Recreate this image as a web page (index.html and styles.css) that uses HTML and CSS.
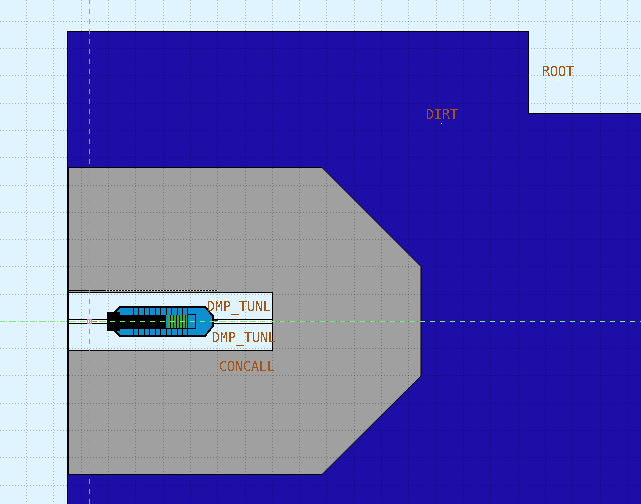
FILE: index.html
```html
<!DOCTYPE html>
<html lang="en">
<head>
<meta charset="utf-8">
<title>Geometry view</title>
<link rel="stylesheet" href="styles.css">
</head>
<body>
<svg class="canvas" width="641" height="504" viewBox="0 0 641 504" xmlns="http://www.w3.org/2000/svg">
  <defs>
    <filter id="crisp" x="-5%" y="-20%" width="110%" height="140%" color-interpolation-filters="sRGB">
      <feComponentTransfer>
        <feFuncA type="discrete" tableValues="0 0 1 1"/>
      </feComponentTransfer>
    </filter>
  </defs>

  <!-- regions -->
  <path class="dirt" d="M67.500 31.500H528.500V113.500H642V505H67.500Z"/>
  <path class="concrete" d="M68 167.500H322L421 266.500V376L322 474.500H68Z"/>
  <rect class="tunnel" x="68.500" y="292.500" width="204" height="58"/>
  <rect class="bore" x="68" y="319.500" width="204.500" height="4"/>
  <path class="edge-thick" d="M68 167V475"/>
  <path class="edge-top" d="M68 290.500H218"/>
  <path class="edge-dots" d="M106 290.500H218"/>

  <!-- grid -->
  <path class="grid" d="M26.500 0V504M53.500 0V504M81.500 0V504M108.500 0V504M135.500 0V504M163.500 0V504M190.500 0V504M217.500 0V504M245.500 0V504M272.500 0V504M299.500 0V504M326.500 0V504M354.500 0V504M381.500 0V504M408.500 0V504M436.500 0V504M463.500 0V504M490.500 0V504M518.500 0V504M545.500 0V504M572.500 0V504M600.500 0V504M627.500 0V504"/>
  <path class="grid" d="M0 21.500H641M0 48.500H641M0 75.500H641M0 103.500H641M0 130.500H641M0 157.500H641M0 185.500H641M0 212.500H641M0 239.500H641M0 266.500H641M0 294.500H641M0 321.500H641M0 348.500H641M0 375.500H641M0 403.500H641M0 430.500H641M0 457.500H641M0 485.500H641"/>

  <!-- device -->
  <path class="needle" d="M196 320H218L212 323H196Z"/>
  <path class="shell" d="M120 307H205L213 316V326L205 336H120L114 330V313Z"/>
  <rect class="core" x="107" y="312" width="13" height="19"/>
  <rect class="core" x="116" y="314.500" width="72" height="14"/>
  <path class="ribs" d="M133.500 307V336M138.500 307V336M144.500 307V336M149.500 307V336M155.500 307V336M160.500 307V336M166.500 307V336M171.500 307V336M177.500 307V336M182.500 307V336M187.500 307V336"/>
  <rect class="coil-lead" x="166" y="315" width="2" height="13"/>
  <path class="coil-lines" d="M169 315V328M172 315V328M175 315V328M178 315V328M181 315V328M184 315V328M186.500 315V328"/>
  <rect class="tip-box" x="187.500" y="314.500" width="7.500" height="14"/>

  <!-- labels -->
  <g class="labels">
    <text class="label" x="542" y="76">ROOT</text>
    <text class="label" x="426" y="119">DIRT</text>
    <text class="label" x="207" y="311">DMP_TUNL</text>
    <text class="label" x="212" y="342">DMP_TUNL</text>
    <text class="label" x="219" y="371">CONCALL</text>
  </g>
  <rect class="speck" x="558" y="80" width="1" height="1"/>
  <rect class="speck" x="441" y="123" width="1" height="1"/>
  <rect class="speck" x="239" y="315" width="1" height="1"/>

  <!-- guides -->
  <path class="axis-x" d="M0 321.500H641"/>
  <path class="axis-red" d="M93 321.500H97"/>
  <path class="axis-y" d="M89.500 0V504"/>
  <rect class="origin" x="87.500" y="319.500" width="4" height="4"/>
</svg>
</body>
</html>
```

FILE: styles.css
```css
html, body {
  margin: 0;
  padding: 0;
  background: #e0f4ff;
  overflow: hidden;
}

.canvas {
  display: block;
  shape-rendering: crispEdges;
}

.dirt {
  fill: #1e0ea8;
  stroke: #000;
  stroke-width: 1;
}

.concrete {
  fill: #a0a0a0;
  stroke: #000;
  stroke-width: 1;
  shape-rendering: auto;
}

.tunnel {
  fill: #e0f4ff;
  stroke: #000;
  stroke-width: 1;
}

.bore {
  fill: #fff;
  stroke: #000;
  stroke-width: 1;
}

.edge-thick {
  stroke: #000;
  stroke-width: 2;
  fill: none;
}

.edge-top {
  stroke: #000;
  stroke-width: 1;
  fill: none;
}

.edge-dots {
  stroke: #fff;
  stroke-width: 1;
  stroke-dasharray: 1 2;
  fill: none;
}

.grid {
  fill: none;
  stroke: #000;
  stroke-opacity: 0.25;
  stroke-width: 1;
  stroke-dasharray: 1 2;
}

.needle {
  fill: #0d8fd0;
  stroke: #000;
  stroke-width: 0.5;
}

.shell {
  fill: #0d8fd0;
  stroke: #000;
  stroke-width: 2;
}

.core {
  fill: #000;
}

.ribs {
  stroke: #000;
  stroke-width: 1;
  fill: none;
}

.coil-lead {
  fill: #0d8fd0;
}

.coil-lines {
  stroke: #30b030;
  stroke-width: 2;
  fill: none;
}

.tip-box {
  fill: #0d8fd0;
  stroke: #000;
  stroke-width: 1;
}

.labels {
  filter: url(#crisp);
}

.label {
  font-family: "DejaVu Sans Mono", monospace;
  font-size: 13.300px;
  fill: #a8540f;
}

.speck {
  fill: #fff;
}

.axis-x {
  stroke: #78f078;
  stroke-width: 1;
  stroke-dasharray: 5 5;
  fill: none;
}

.axis-red {
  stroke: #e06060;
  stroke-width: 1;
  fill: none;
}

.axis-y {
  stroke: #f060f0;
  stroke-width: 1;
  stroke-dasharray: 5 5;
  stroke-dashoffset: 1;
  fill: none;
}

.origin {
  fill: none;
  stroke: #f060f0;
  stroke-width: 1;
}
```
